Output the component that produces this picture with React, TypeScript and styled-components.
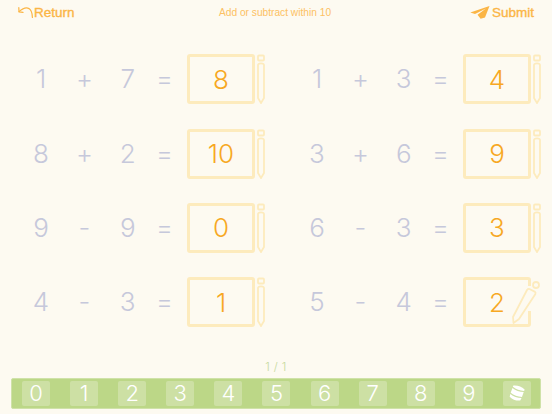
import React from "react";
import styled, { createGlobalStyle } from "styled-components";

const GlobalStyle = createGlobalStyle`
  html, body {
    margin: 0;
    padding: 0;
    background: #fdfaf1;
    font-family: "Inter", "Liberation Sans", sans-serif;
  }
`;

const Page = styled.div`
  width: 552px;
  height: 414px;
  overflow: hidden;
  display: flex;
  flex-direction: column;
  background: #fdfaf1;
`;

const Header = styled.header`
  height: 42px;
  display: grid;
  grid-template-columns: 1fr auto 1fr;
  align-items: start;
  padding: 3px 18px 0 18px;
  box-sizing: border-box;
  color: #fbb545;
`;

const HeaderButton = styled.div<{ $end?: boolean }>`
  display: flex;
  align-items: center;
  justify-content: ${(p) => (p.$end ? "flex-end" : "flex-start")};
  height: 18px;
  gap: ${(p) => (p.$end ? "2px" : "1px")};
  font-family: "Liberation Sans", sans-serif;
  font-size: 13.5px;
  font-weight: 500;
  -webkit-text-stroke: 0.35px #fbb545;
`;

const Title = styled.div`
  font-family: "Liberation Sans", sans-serif;
  font-size: 10.2px;
  line-height: 12px;
  margin: 4px 2px 0 0;
  color: #fcc163;
`;

const Board = styled.main`
  display: grid;
  grid-template-columns: 276px 276px;
  grid-auto-rows: 74.4px;
`;

const Problem = styled.div`
  display: grid;
  grid-template-columns: 44px 43px 43.5px 30px 7.5px 68px 2px 8px;
  align-items: center;
  padding-left: 19px;
`;

const Token = styled.span<{ $column: number }>`
  grid-column: ${(p) => p.$column};
  text-align: center;
  font-size: 26px;
  font-weight: 300;
  line-height: 30px;
  color: #c6c8db;
`;

const AnswerBox = styled.div`
  grid-column: 6;
  position: relative;
  height: 50px;
  box-sizing: border-box;
  border: 3px solid #fdebbd;
  border-radius: 3px;
  display: flex;
  align-items: center;
  justify-content: center;
  font-size: 26px;
  font-weight: 300;
  color: #f7a823;
`;

const BorderGap = styled.span`
  position: absolute;
  right: -4px;
  top: 6px;
  width: 5px;
  height: 25px;
  background: #fdfaf1;
`;

const SlantedPencil = styled.svg`
  position: absolute;
  left: 46px;
  top: -2px;
  width: 28px;
  height: 50px;
`;

const PencilHolder = styled.svg`
  grid-column: 8;
  width: 8px;
  height: 50px;
`;

const Pager = styled.div`
  margin-top: 19px;
  text-align: center;
  height: 16px;
  font-size: 11.5px;
  font-weight: 300;
  line-height: 16px;
  letter-spacing: 0.4px;
  color: #c5d99b;
`;

const Keypad = styled.div`
  margin: 3px 11px 0;
  height: 31px;
  box-sizing: border-box;
  padding: 2px 0 0 10px;
  display: flex;
  gap: 20.1px;
  background: #bcd787;
  border: 1px solid #cfe2a8;
  border-radius: 2px;
`;

const Key = styled.div`
  width: 28px;
  height: 25px;
  border-radius: 2px;
  display: flex;
  align-items: center;
  justify-content: center;
  background: #cde0a4;
  color: #fff;
  font-size: 22px;
  font-weight: 300;
`;

const UprightPencil = () => (
  <PencilHolder viewBox="0 0 8 50" fill="none" stroke="#fdebbd" strokeWidth="1.8">
    <rect x="1" y="1.5" width="6" height="5" rx="1" />
    <path d="M1 11 Q1 9.4 4 9.4 Q7 9.4 7 11 V44 L4 49 L1 44 Z" />
  </PencilHolder>
);

const EraserIcon = () => (
  <svg width="20" height="20" viewBox="0 0 20 20" fill="#fff">
    <g transform="rotate(20 10 10)">
      <path d="M4 4.2 Q10 1.4 16 4.2 L16 5.6 Q10 7.8 4 5.6 Z" />
      <path d="M4 6.8 Q10 9 16 6.8 L16 12 Q10 14.2 4 12 Z" />
      <path d="M4 13.2 Q10 15.4 16 13.2 L15.6 16 Q10 18.6 4.4 16 Z" />
    </g>
  </svg>
);

const PaperPlane = () => (
  <svg width="20" height="13" viewBox="0 0 20 13" fill="#fbb545">
    <path d="M19.5 0 L0.3 6.4 L5 8 L16 2.4 L7.5 8.8 L10.6 12.8 L15 11.6 Z" />
  </svg>
);

const ReturnArrow = () => (
  <svg width="15" height="13" viewBox="0 0 15 13" fill="none" stroke="#fbb545" strokeWidth="1.2" strokeLinecap="round" strokeLinejoin="round">
    <path d="M1 5.6 Q7 0.4 11 2.6 Q14.2 4.6 14.4 11.5" />
    <path d="M0.8 1.6 L1 5.8 L5 6.4" />
  </svg>
);

type ProblemData = {
  left: number;
  op: string;
  right: number;
  answer: number;
  editing?: boolean;
};

const problems: ProblemData[] = [
  { left: 1, op: "+", right: 7, answer: 8 },
  { left: 1, op: "+", right: 3, answer: 4 },
  { left: 8, op: "+", right: 2, answer: 10 },
  { left: 3, op: "+", right: 6, answer: 9 },
  { left: 9, op: "-", right: 9, answer: 0 },
  { left: 6, op: "-", right: 3, answer: 3 },
  { left: 4, op: "-", right: 3, answer: 1 },
  { left: 5, op: "-", right: 4, answer: 2, editing: true },
];

const keys = ["0", "1", "2", "3", "4", "5", "6", "7", "8", "9"];

export default function App() {
  return (
    <Page>
      <GlobalStyle />
      <Header>
        <HeaderButton>
          <ReturnArrow />
          Return
        </HeaderButton>
        <Title>Add or subtract within 10</Title>
        <HeaderButton $end>
          <PaperPlane />
          Submit
        </HeaderButton>
      </Header>
      <Board>
        {problems.map((item, index) => (
          <Problem key={index}>
            <Token $column={1}>{item.left}</Token>
            <Token $column={2}>{item.op}</Token>
            <Token $column={3}>{item.right}</Token>
            <Token $column={4}>=</Token>
            <AnswerBox>
              {item.answer}
              {item.editing && (
                <>
                  <BorderGap />
                  <SlantedPencil viewBox="0 0 28 50" fill="none" stroke="#fdebbd" strokeWidth="1.8" strokeLinejoin="round">
                    <circle cx="24" cy="7" r="3" />
                    <path d="M15 12 Q16 10.6 17.5 11 L22.6 13.6 Q24 14.6 23.4 16 L7 41 L1.5 45 L1 39 Z" />
                  </SlantedPencil>
                </>
              )}
            </AnswerBox>
            {!item.editing && <UprightPencil />}
          </Problem>
        ))}
      </Board>
      <Pager>1 / 1</Pager>
      <Keypad>
        {keys.map((digit) => (
          <Key key={digit}>{digit}</Key>
        ))}
        <Key>
          <EraserIcon />
        </Key>
      </Keypad>
    </Page>
  );
}
